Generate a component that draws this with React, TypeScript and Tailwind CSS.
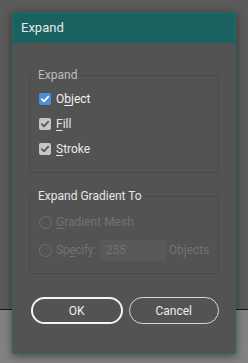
import React from 'react';

function Check({ color }: { color: string }) {
  return (
    <svg width="12" height="12" viewBox="0 0 12 12" className="block">
      <polyline points="2.8,6.2 5,8.4 9.3,3.6" fill="none" stroke={color} strokeWidth="1.7" strokeLinecap="round" strokeLinejoin="round" />
    </svg>
  );
}

function CheckRow({ label, hot, blue }: { label: React.ReactNode; hot?: boolean; blue?: boolean }) {
  return (
    <div className="flex h-[25px] items-center gap-[5px]">
      <span
        className={
          blue
            ? 'flex h-[12px] w-[12px] items-center justify-center rounded-[2px] bg-[#4a8fdb]'
            : 'flex h-[12px] w-[12px] items-center justify-center rounded-[2px] bg-[#c6c6c6]'
        }
      >
        <Check color={blue ? '#ffffff' : '#555555'} />
      </span>
      <span className={hot ? 'text-[#f2f2f2]' : 'text-[#e8e8e8]'}>{label}</span>
    </div>
  );
}

function Radio() {
  return <span className="h-[13px] w-[13px] rounded-full border border-[#717171]" />;
}

export default function App() {
  return (
    <div className="relative h-[363px] w-[248px] overflow-hidden bg-[#5a5a5a] font-['Roboto',sans-serif] text-[12px]">
      <div className="flex h-full flex-col">
        <div className="h-[309px]" />
        <div className="h-px bg-[#1a1a1a]" />
        <div className="flex-1 bg-[#828282]" />
      </div>

      <div className="absolute left-[12px] top-[12px] flex h-[342px] w-[224px] flex-col border border-[#2c6766] bg-[#535353] shadow-[0_2px_8px_rgba(0,0,0,0.45)]">
        <div className="flex h-[30px] items-center bg-[#19625f] pl-[8px] text-[13px] text-[#e8e8e8]">Expand</div>

        <div className="flex flex-col px-[16px] pt-[32px]">
          <div className="relative h-[98px] rounded-[2px] border border-[#4a4a4a] pl-[9px] pt-[10px]">
            <span className="absolute -top-[9px] left-[6px] bg-[#535353] px-[2px] leading-[16px] text-[#bdbdbd]">Expand</span>
            <CheckRow blue hot label={<>O<span className="underline underline-offset-2">b</span>ject</>} />
            <CheckRow label={<><span className="underline underline-offset-2">F</span>ill</>} />
            <CheckRow label={<><span className="underline underline-offset-2">S</span>troke</>} />
          </div>

          <div className="relative mt-[23px] h-[78px] rounded-[2px] border border-[#4a4a4a] pl-[9px] pt-[11px] text-[#727272]">
            <span className="absolute -top-[9px] left-[6px] bg-[#535353] px-[2px] leading-[16px] text-[#e6e6e6]">Expand Gradient To</span>
            <div className="flex h-[28px] items-center gap-[4px]">
              <Radio />
              <span><span className="underline underline-offset-2">G</span>radient Mesh</span>
            </div>
            <div className="flex h-[28px] items-center gap-[3px]">
              <Radio />
              <span className="ml-[1px] tracking-[-0.3px]">Sp<span className="underline underline-offset-2">e</span>cify:</span>
              <span className="ml-[1px] flex h-[21px] w-[66px] items-center bg-[#595959] pl-[6px]">255</span>
              <span>Objects</span>
            </div>
          </div>

          <div className="mt-[23px] flex gap-[6px] pl-[2px]">
            <button className="flex h-[27px] w-[92px] items-center justify-center rounded-full border-2 border-[#f4f4f4] text-[#f0f0f0]">OK</button>
            <button className="flex h-[27px] w-[91px] items-center justify-center rounded-full border-[1.5px] border-[#d8d8d8] text-[#ececec]">Cancel</button>
          </div>
        </div>
      </div>
    </div>
  );
}
